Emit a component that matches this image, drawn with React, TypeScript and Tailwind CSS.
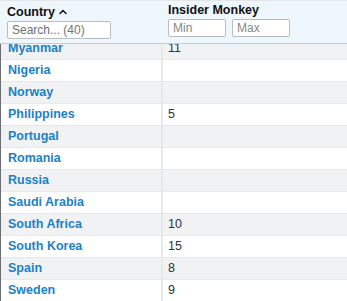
import React from 'react';
import { ChevronUp } from 'lucide-react';

interface Row {
  country: string;
  value?: number;
}

const rows: Row[] = [
  { country: 'Myanmar', value: 11 },
  { country: 'Nigeria' },
  { country: 'Norway' },
  { country: 'Philippines', value: 5 },
  { country: 'Portugal' },
  { country: 'Romania' },
  { country: 'Russia' },
  { country: 'Saudi Arabia' },
  { country: 'South Africa', value: 10 },
  { country: 'South Korea', value: 15 },
  { country: 'Spain', value: 8 },
  { country: 'Sweden', value: 9 },
];

export default function App() {
  return (
    <div className="w-[347px] h-[301px] overflow-hidden bg-white font-['Liberation_Sans',Arial,sans-serif] flex flex-col">
      {/* header */}
      <div className="h-[44px] shrink-0 flex bg-[#eef6fe] border-t border-[#e2e6ea] border-b border-b-[#c9cdd1]">
        <div className="w-[163px] shrink-0 pl-[7px] pt-[3px]">
          <div className="h-[16px] flex items-center gap-[2px] text-[12.5px] font-bold text-[#111] leading-[16px]">
            Country
            <ChevronUp className="h-[12px] w-[12px]" strokeWidth={3} />
          </div>
          <input
            className="block mt-[1px] w-[104px] h-[18px] bg-white border border-[#b9bdc2] rounded-[2px] px-[4px] text-[12px] text-[#333] placeholder:text-[#707070] outline-none"
            placeholder="Search... (40)"
          />
        </div>
        <div className="flex-1 pl-[5px] pt-[2px]">
          <div className="text-[12.5px] font-bold text-[#111] leading-[15px]">Insider Monkey</div>
          <div className="flex gap-[6px] mt-[1px]">
            <input
              className="w-[58px] h-[18px] bg-white border border-[#b9bdc2] rounded-[2px] px-[4px] text-[12px] placeholder:text-[#888] outline-none"
              placeholder="Min"
            />
            <input
              className="w-[58px] h-[18px] bg-white border border-[#b9bdc2] rounded-[2px] px-[4px] text-[12px] placeholder:text-[#888] outline-none"
              placeholder="Max"
            />
          </div>
        </div>
      </div>

      {/* body */}
      <div className="flex-1 overflow-hidden border-l border-[#6b6f74]">
        <div className="-mt-[6px]">
          {rows.map((row, i) => (
            <div
              key={row.country}
              className={`flex h-[22px] border-b border-[#e6e8eb] ${i % 2 === 0 ? 'bg-[#f1f2f4]' : 'bg-white'}`}
            >
              <div className="w-[162px] shrink-0 border-r-2 border-[#e6e8eb] pl-[7px] flex items-center text-[12.5px] font-bold text-[#1c81c7]">
                {row.country}
              </div>
              <div className="flex-1 pl-[5px] flex items-center text-[12.5px] text-[#333]">
                {row.value ?? ''}
              </div>
            </div>
          ))}
        </div>
      </div>
    </div>
  );
}
